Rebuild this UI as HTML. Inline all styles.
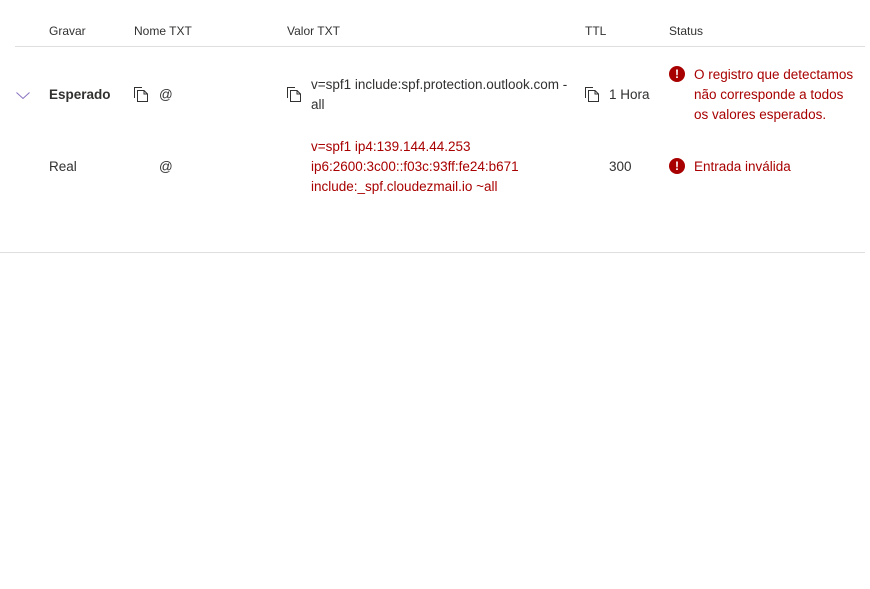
<!DOCTYPE html>
<html><head><meta charset="utf-8"><style>
body{margin:0;width:870px;height:589px;background:#fff;font-family:"Liberation Sans",sans-serif;color:#323130;position:relative;overflow:hidden}
.a{position:absolute;white-space:nowrap}
.h{font-size:12px;top:23px;line-height:16px;color:#323130}
.t{font-size:13.5px;line-height:20px}
.r{color:#a80000}
.hr{position:absolute;left:15px;width:850px;height:1px;background:#e1dfdd}
svg.c{position:absolute}
.ic{position:absolute;width:16px;height:16px;border-radius:50%;background:#a80000;color:#fff;font-weight:bold;font-size:12px;line-height:16px;text-align:center}
</style></head><body>
<div class="a h" style="left:49px">Gravar</div>
<div class="a h" style="left:134px">Nome TXT</div>
<div class="a h" style="left:287px">Valor TXT</div>
<div class="a h" style="left:585px">TTL</div>
<div class="a h" style="left:669px">Status</div>
<div class="hr" style="top:46px"></div>

<svg class="c" style="left:16px;top:91px" width="14" height="9" viewBox="0 0 14 9"><path d="M0.5 1.5 L7 7.5 L13.5 1.5" fill="none" stroke="#8a70c0" stroke-width="1"/></svg>
<div class="a t" style="left:49px;top:85px;font-weight:bold">Esperado</div>

<svg class="c" style="left:134px;top:87px" width="15" height="15" viewBox="0 0 15 15"><path d="M0.5 11 V0.5 H8" fill="none" stroke="#323130"/><path d="M3.5 3.5 H10 L13.5 7 V14.5 H3.5 Z M10 3.5 V7 H13.5" fill="none" stroke="#323130"/></svg>
<div class="a t" style="left:159px;top:85px">@</div>

<svg class="c" style="left:287px;top:87px" width="15" height="15" viewBox="0 0 15 15"><path d="M0.5 11 V0.5 H8" fill="none" stroke="#323130"/><path d="M3.5 3.5 H10 L13.5 7 V14.5 H3.5 Z M10 3.5 V7 H13.5" fill="none" stroke="#323130"/></svg>
<div class="a t" style="left:311px;top:75px">v=spf1 include:spf.protection.outlook.com -<br>all</div>

<svg class="c" style="left:585px;top:87px" width="15" height="15" viewBox="0 0 15 15"><path d="M0.5 11 V0.5 H8" fill="none" stroke="#323130"/><path d="M3.5 3.5 H10 L13.5 7 V14.5 H3.5 Z M10 3.5 V7 H13.5" fill="none" stroke="#323130"/></svg>
<div class="a t" style="left:609px;top:85px">1 Hora</div>

<div class="ic" style="left:669px;top:66px">!</div>
<div class="a t r" style="left:694px;top:65px">O registro que detectamos<br>não corresponde a todos<br>os valores esperados.</div>

<div class="a t" style="left:49px;top:157px">Real</div>
<div class="a t" style="left:159px;top:157px">@</div>
<div class="a t r" style="left:311px;top:137px">v=spf1 ip4:139.144.44.253<br>ip6:2600:3c00::f03c:93ff:fe24:b671<br>include:_spf.cloudezmail.io ~all</div>
<div class="a t" style="left:609px;top:157px">300</div>
<div class="ic" style="left:669px;top:158px">!</div>
<div class="a t r" style="left:694px;top:157px">Entrada inválida</div>

<div class="hr" style="top:252px;left:0;width:865px"></div>
</body></html>
